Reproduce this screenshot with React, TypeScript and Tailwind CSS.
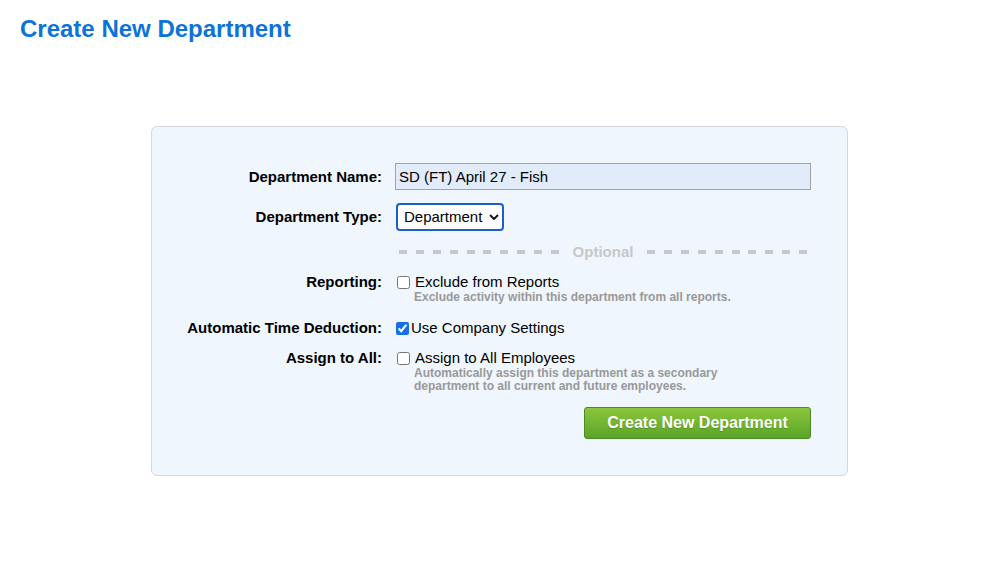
import { useState } from "react";

const dash =
	"h-[4px] bg-[repeating-linear-gradient(90deg,#c8c8c8_0px,#c8c8c8_8px,transparent_8px,transparent_16.9px)]";

export default function App() {
	const [name, setName] = useState("SD (FT) April 27 - Fish");
	const [type, setType] = useState("department");
	const [exclude, setExclude] = useState(false);
	const [useCompany, setUseCompany] = useState(true);
	const [assignAll, setAssignAll] = useState(false);

	return (
		<div className="min-h-[580px] w-full bg-white font-['Liberation_Sans',Arial,sans-serif] text-black">
			<h1 className="pl-[20px] pt-[15px] text-[24px] font-bold leading-[28px] text-[#0b74d6]">
				Create New Department
			</h1>

			<div className="ml-[151px] mt-[83px] w-[697px] rounded-[6px] border border-[#d3d9df] bg-[#eff6fd] pb-[36px] pt-[36px]">
				{/* name */}
				<div className="flex items-center">
					<label className="w-[230px] pt-[2px] text-right text-[15px] font-bold">Department Name:</label>
					<input
						value={name}
						onChange={(e) => setName(e.target.value)}
						className="ml-[13px] h-[27px] w-[416px] border border-[#a3a3a3] bg-[#e2ebfa] px-[3px] text-[15px] outline-none"
					/>
				</div>

				{/* type */}
				<div className="mt-[13px] flex items-center">
					<label className="w-[230px] text-right text-[15px] font-bold">Department Type:</label>
					<div className="ml-[14px] flex h-[28px] w-[108px] items-center rounded-[4px] border-2 border-[#1c5fc9] bg-white pl-[6px] pr-[3px]">
						<select
							value={type}
							onChange={(e) => setType(e.target.value)}
							className="min-w-0 flex-1 appearance-none bg-transparent text-[15px] outline-none"
						>
							<option value="department">Department</option>
							<option value="job">Job</option>
						</select>
						<svg width="10" height="7" viewBox="0 0 10 7" className="shrink-0">
							<path d="M1.5 1.5 L5 5 L8.5 1.5" fill="none" stroke="#111" strokeWidth="1.8" strokeLinecap="round" strokeLinejoin="round" />
						</svg>
					</div>
				</div>

				{/* optional divider */}
				<div className="ml-[247px] mt-[11px] flex w-[409px] items-center">
					<div className={`${dash} w-[160px]`} />
					<span className="mx-auto text-[15px] font-bold leading-[20px] text-[#c8c8c8]">Optional</span>
					<div className={`${dash} w-[161px]`} />
				</div>

				{/* reporting */}
				<div className="mt-[11px] flex items-start">
					<label className="w-[230px] text-right text-[15px] font-bold leading-[18px]">Reporting:</label>
					<div className="ml-[13px]">
						<label className="flex items-center text-[15px] leading-[18px]">
							<input
								type="checkbox"
								checked={exclude}
								onChange={(e) => setExclude(e.target.checked)}
								className="m-0 ml-[2px] mr-[5px] h-[13px] w-[13px] accent-[#1670e8]"
							/>
							Exclude from Reports
						</label>
						<p className="pl-[19px] text-[12px] font-bold leading-[13px] text-[#999999]">
							Exclude activity within this department from all reports.
						</p>
					</div>
				</div>

				{/* auto time deduction */}
				<div className="mt-[15px] flex items-start">
					<label className="w-[230px] text-right text-[15px] font-bold leading-[18px]">Automatic Time Deduction:</label>
					<label className="ml-[13px] flex items-center text-[15px] leading-[18px]">
						<input
							type="checkbox"
							checked={useCompany}
							onChange={(e) => setUseCompany(e.target.checked)}
							className="m-0 ml-[1px] mr-[2px] h-[13px] w-[13px] accent-[#1670e8]"
						/>
						Use Company Settings
					</label>
				</div>

				{/* assign to all */}
				<div className="mt-[12px] flex items-start">
					<label className="w-[230px] text-right text-[15px] font-bold leading-[18px]">Assign to All:</label>
					<div className="ml-[13px]">
						<label className="flex items-center text-[15px] leading-[18px]">
							<input
								type="checkbox"
								checked={assignAll}
								onChange={(e) => setAssignAll(e.target.checked)}
								className="m-0 ml-[2px] mr-[5px] h-[13px] w-[13px] accent-[#1670e8]"
							/>
							Assign to All Employees
						</label>
						<p className="w-[340px] pl-[19px] text-[12px] font-bold leading-[13px] text-[#999999]">
							Automatically assign this department as a secondary
							<br />
							department to all current and future employees.
						</p>
					</div>
				</div>

				<div className="mt-[14px] flex justify-end pr-[36px]">
					<button className="h-[32px] w-[227px] rounded-[3px] border border-[#4c8a25] bg-gradient-to-b from-[#8cc63c] to-[#58a527] text-[16px] font-bold text-white [text-shadow:0_1px_1px_rgba(0,0,0,0.2)]">
						Create New Department
					</button>
				</div>
			</div>
		</div>
	);
}
